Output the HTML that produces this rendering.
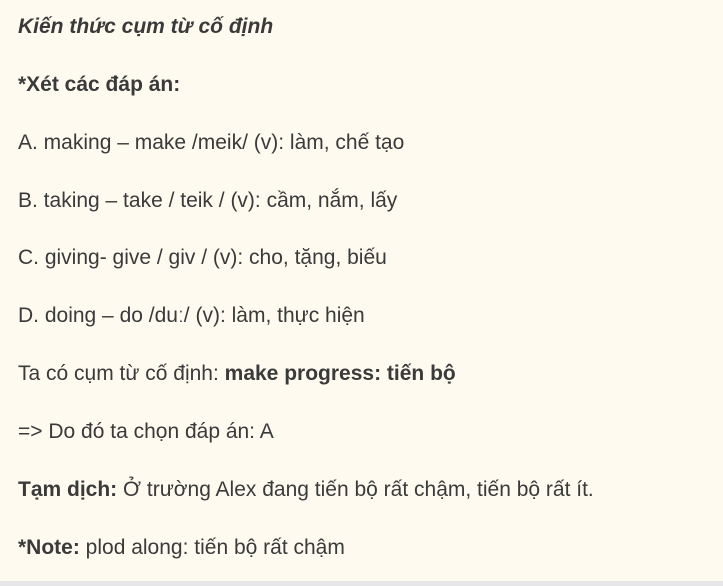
<!DOCTYPE html>
<html><head><meta charset="utf-8">
<style>
html,body{margin:0;padding:0;}
body{width:723px;height:586px;background:#fefaf0;position:relative;overflow:hidden;
font-family:"Liberation Sans",Arial,sans-serif;font-size:21px;color:#3a3a3a;}
.l{position:absolute;left:18px;white-space:nowrap;line-height:26px;}
b{font-weight:bold;}
.bar{position:absolute;left:0;right:0;top:581px;height:5px;background:#e6e6e8;}
</style></head><body>
<div class="l" style="top:14px"><b><i>Kiến thức cụm từ cố định</i></b></div>
<div class="l" style="top:72px"><b>*Xét các đáp án:</b></div>
<div class="l" style="top:130px">A. making – make /meik/ (v): làm, chế tạo</div>
<div class="l" style="top:188px">B. taking – take / teik / (v): cầm, nắm, lấy</div>
<div class="l" style="top:245px">C. giving- give / giv / (v): cho, tặng, biếu</div>
<div class="l" style="top:303px">D. doing – do /duː/ (v): làm, thực hiện</div>
<div class="l" style="top:361px">Ta có cụm từ cố định: <b>make progress: tiến bộ</b></div>
<div class="l" style="top:419px">=&gt; Do đó ta chọn đáp án: A</div>
<div class="l" style="top:477px"><b>Tạm dịch:</b> Ở trường Alex đang tiến bộ rất chậm, tiến bộ rất ít.</div>
<div class="l" style="top:535px"><b>*Note:</b> plod along: tiến bộ rất chậm</div>
<div class="bar"></div>
</body></html>
